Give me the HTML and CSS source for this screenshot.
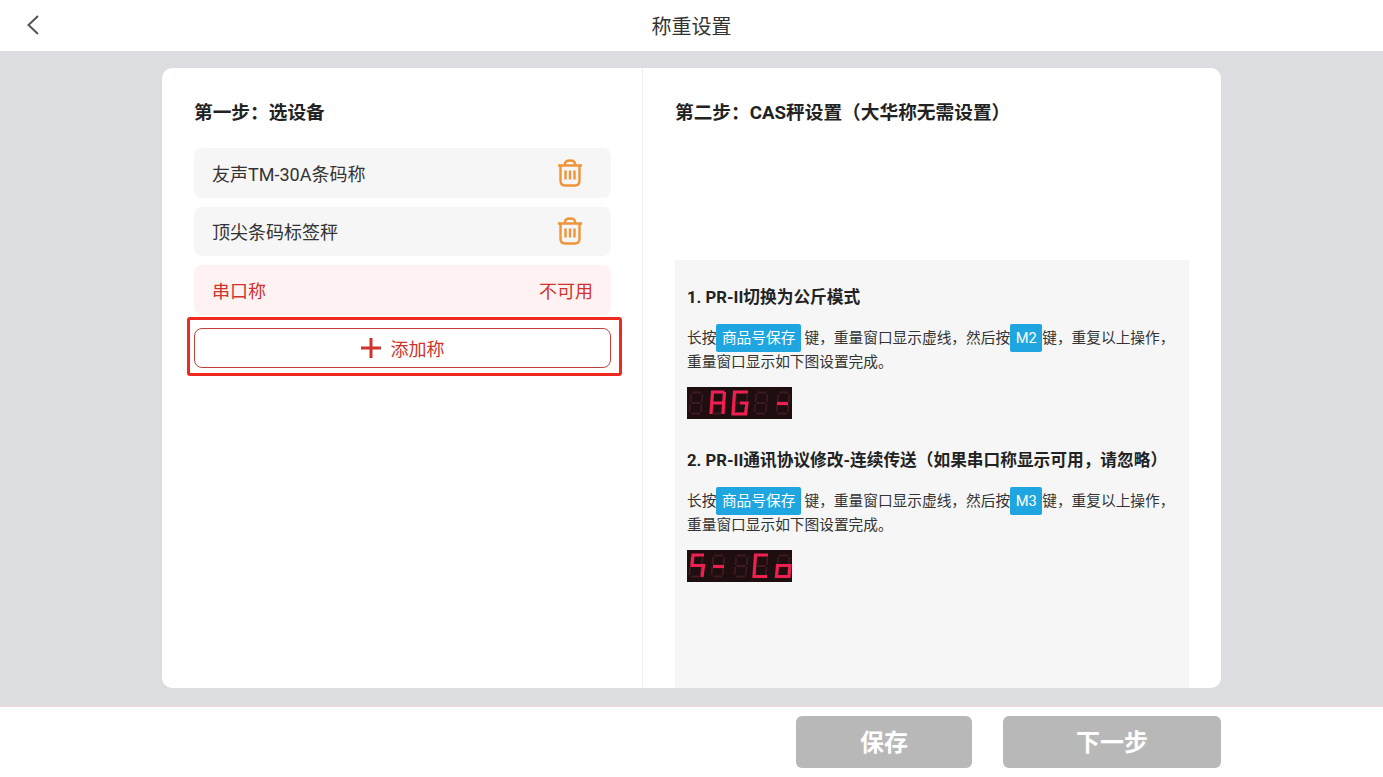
FILE: index.html
```html
<!DOCTYPE html>
<html lang="zh-CN">

<head>
  <meta charset="UTF-8">
  <meta name="viewport" content="width=device-width, initial-scale=1.0">
  <title>称重设置</title>
  <link rel="stylesheet" href="styles.css">
</head>

<body>
  <svg class="defs" width="0" height="0">
    <defs>
      <path id="seg-all" d="M4 1.500H13M14.500 3L13.800 11M13.500 13L12.800 21M3 22.500H12M1.500 21L2.200 13M2.500 11L3.200 3M3.500 12H12.500"/>
      <symbol id="trash" viewBox="0 0 26 28">
        <path d="M1 6.500H25M8 6.500V5C8 3 10 1.500 13 1.500S18 3 18 5V6.500M3.500 6.500V21.500C3.500 24.800 5.200 26.500 8 26.500H18C20.800 26.500 22.500 24.800 22.500 21.500V6.500M8.500 11.500V20.500M13 11.500V20.500M17.500 11.500V20.500"/>
      </symbol>
    </defs>
  </svg>

  <header class="topbar">
    <svg class="back-icon" viewBox="0 0 14 22" width="14" height="22">
      <path d="M12 2L2.500 11L12 20"/>
    </svg>
    <h1 class="topbar-title">称重设置</h1>
  </header>

  <main class="content">
    <div class="card">
      <section class="col-left">
        <h2 class="step-title">第一步：选设备</h2>
        <div class="device-list">
          <div class="device-row">
            <span>友声TM-30A条码称</span>
            <svg class="trash-icon" width="26" height="28"><use href="#trash"/></svg>
          </div>
          <div class="device-row">
            <span>顶尖条码标签秤</span>
            <svg class="trash-icon" width="26" height="28"><use href="#trash"/></svg>
          </div>
          <div class="device-row device-bad">
            <span>串口称</span>
            <span>不可用</span>
          </div>
        </div>
        <div class="add-wrap">
          <button class="add-btn">
            <svg class="plus-icon" viewBox="0 0 20 20" width="20" height="20">
              <path d="M10 0V20M0 10H20"/>
            </svg>
            添加称
          </button>
          <div class="mark-box"></div>
        </div>
      </section>

      <section class="col-right">
        <h2 class="step-title">第二步：CAS秤设置（大华称无需设置）</h2>
        <div class="guide">
          <h3 class="guide-title">1. PR-II切换为公斤模式</h3>
          <p class="guide-text">长按<span class="key">商品号保存</span> 键，重量窗口显示虚线，然后按<span class="key">M2</span>键，重复以上操作，<br>重量窗口显示如下图设置完成。</p>
          <svg class="led" viewBox="0 0 105 32" width="105" height="32">
            <rect width="105" height="32" fill="#1e0e10"/>
            <g class="seg-off">
              <use href="#seg-all" x="1" y="4"/>
              <use href="#seg-all" x="22" y="4"/>
              <use href="#seg-all" x="46" y="4"/>
              <use href="#seg-all" x="66" y="4"/>
              <use href="#seg-all" x="88" y="4"/>
            </g>
            <g class="seg-on">
              <path d="M24 27L25.500 5H37.500M25 16H36.500M37.500 5L36 27"/>
              <path d="M61 5H47.500L46 27H58.500L60 16H53"/>
              <path d="M90 16.500H101"/>
            </g>
          </svg>

          <h3 class="guide-title guide-title-second">2. PR-II通讯协议修改-连续传送（如果串口称显示可用，请忽略）</h3>
          <p class="guide-text">长按<span class="key">商品号保存</span> 键，重量窗口显示虚线，然后按<span class="key">M3</span>键，重复以上操作，<br>重量窗口显示如下图设置完成。</p>
          <svg class="led" viewBox="0 0 105 32" width="105" height="32">
            <rect width="105" height="32" fill="#1e0e10"/>
            <g class="seg-off">
              <use href="#seg-all" x="1" y="4"/>
              <use href="#seg-all" x="23" y="4"/>
              <use href="#seg-all" x="46" y="4"/>
              <use href="#seg-all" x="66" y="4"/>
              <use href="#seg-all" x="88" y="4"/>
            </g>
            <g class="seg-on">
              <path d="M17 5H6L5 15.500H16.500L15 27"/>
              <path d="M26 16.500H37"/>
              <path d="M81 5H68.500L67 26.500H80"/>
              <path d="M90.500 15.500H103L102 26.500H89.500Z"/>
            </g>
          </svg>
        </div>
      </section>
    </div>
  </main>

  <footer class="bottombar">
    <button class="foot-btn foot-save">保存</button>
    <button class="foot-btn foot-next">下一步</button>
  </footer>
</body>

</html>
```

FILE: styles.css
```css
* {
  box-sizing: border-box;
}

html,
body {
  height: 100%;
}

body {
  margin: 0;
  height: 777px;
  overflow: hidden;
  display: flex;
  flex-direction: column;
  font-family: Roboto, "Noto Sans CJK SC", sans-serif;
  color: #333;
  background-color: #fff;
}

.defs {
  position: absolute;
}

.topbar {
  height: 51px;
  flex: none;
  display: flex;
  align-items: center;
  justify-content: center;
  padding-bottom: 1px;
  background-color: #fff;
}

.back-icon {
  position: absolute;
  left: 26px;
  top: 14px;
  fill: none;
  stroke: #555;
  stroke-width: 2;
}

.topbar-title {
  margin: 0;
  font-size: 20px;
  font-weight: 400;
  color: #333;
}

.content {
  height: 656px;
  flex: none;
  padding: 17px 162px 0;
  background-color: #dcdde1;
  border-bottom: 2px solid #ecd9dc;
}

.card {
  height: 620px;
  display: flex;
  background-color: #fff;
  border-radius: 10px;
  overflow: hidden;
}

.col-left {
  width: 481px;
  padding: 0 31px 0 32px;
  border-right: 1px solid #f0f0f0;
}

.col-right {
  flex: 1;
  padding: 0 32px;
  display: flex;
  flex-direction: column;
}

.step-title {
  margin: 0;
  height: 80px;
  line-height: 91px;
  font-size: 18.700px;
  font-weight: 700;
  color: #222;
}

.device-list {
  display: flex;
  flex-direction: column;
  gap: 9px;
}

.device-row {
  height: 49.500px;
  padding: 0 18px;
  display: flex;
  align-items: center;
  justify-content: space-between;
  background-color: #f6f6f6;
  border-radius: 8px;
  font-size: 18px;
  color: #333;
}

.device-bad {
  background-color: #fff2f2;
  color: #d0332d;
}

.trash-icon {
  fill: none;
  stroke: #f0943a;
  stroke-width: 2.400;
  margin-right: 10px;
}

.add-wrap {
  position: relative;
  margin-top: 13.500px;
}

.add-btn {
  width: 100%;
  height: 40px;
  display: flex;
  align-items: center;
  justify-content: center;
  gap: 10px;
  padding-bottom: 2px;
  background-color: #fff;
  border: 1px solid #c0403a;
  border-radius: 8px;
  font-family: inherit;
  font-size: 18px;
  color: #d0332d;
}

.plus-icon {
  stroke: #d0332d;
  stroke-width: 3;
}

.mark-box {
  position: absolute;
  left: -7px;
  right: -11px;
  top: -11px;
  bottom: -8px;
  border: 3px solid #ee2a20;
  border-radius: 3px;
}

.guide {
  margin-top: 112px;
  flex: 1;
  padding: 0 12px;
  background-color: #f6f6f6;
}

.guide-title {
  margin: 26px 0 0;
  font-size: 16.700px;
  line-height: 24px;
  font-weight: 700;
  color: #222;
}

.guide-title-second {
  margin-top: 30px;
}

.guide-text {
  margin: 16px 0 0;
  font-size: 14.700px;
  line-height: 24px;
  white-space: nowrap;
  color: #333;
}

.key {
  padding: 5px 5.500px;
  background-color: #1fa6e0;
  border-radius: 2px;
  color: #fff;
}

.led {
  display: block;
  margin-top: 13px;
}

.seg-off {
  fill: none;
  stroke: #3f1a1f;
  stroke-width: 1.800;
  filter: blur(0.6px);
}

.seg-on {
  fill: none;
  stroke: #ef1f52;
  stroke-width: 3.200;
  filter: blur(0.7px);
}

.bottombar {
  flex: 1;
  display: flex;
  justify-content: flex-end;
  gap: 31px;
  padding: 9px 162px 0 0;
  background-color: #fff;
}

.foot-btn {
  height: 52px;
  padding: 0 0 3px;
  border: none;
  border-radius: 6px;
  background-color: #b8b8b8;
  font-family: inherit;
  font-size: 24px;
  font-weight: 700;
  color: #fff;
}

.foot-save {
  width: 176px;
}

.foot-next {
  width: 218px;
}
```
